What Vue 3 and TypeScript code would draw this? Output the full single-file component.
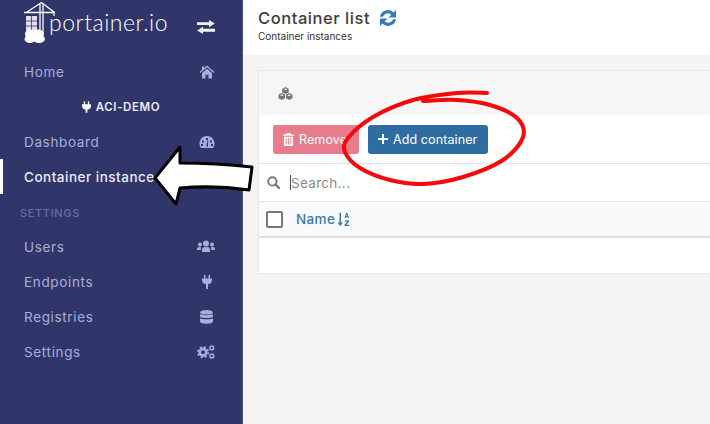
<script setup lang="ts">
interface NavItem { label: string; icon: string; active?: boolean }
const topItems: NavItem[] = [{ label: 'Dashboard', icon: 'gauge' }, { label: 'Container instances', icon: '', active: true }]
const settingsItems: NavItem[] = [
  { label: 'Users', icon: 'users' },
  { label: 'Endpoints', icon: 'plug' },
  { label: 'Registries', icon: 'db' },
  { label: 'Settings', icon: 'cogs' },
]

// hand-drawn red ring: a smooth line through the sampled points
const ring: [number, number][] = [
  [487, 93], [457, 93], [413, 100], [373, 117], [348, 138], [345, 152], [360, 168], [390, 180],
  [423, 184], [463, 177], [503, 160], [523, 137], [517, 118], [490, 105], [457, 100], [423, 101],
]
function smooth(p: [number, number][]): string {
  let d = `M${p[0][0]} ${p[0][1]}`
  for (let i = 0; i < p.length - 1; i++) {
    const a = p[Math.max(i - 1, 0)]
    const b = p[i]
    const c = p[i + 1]
    const e = p[Math.min(i + 2, p.length - 1)]
    d += `C${b[0] + (c[0] - a[0]) / 6} ${b[1] + (c[1] - a[1]) / 6} ${c[0] - (e[0] - b[0]) / 6} ${c[1] - (e[1] - b[1]) / 6} ${c[0]} ${c[1]}`
  }
  return d
}
const ringPath = smooth(ring)
</script>

<template>
  <div class="page">
    <aside class="sidebar">
      <div class="brand">
        <svg class="logo" viewBox="0 0 32 44" width="32" height="44">
          <g fill="none" stroke="#fff" stroke-width="1.300">
            <path d="M0 11.500H31M16 2V32M19 2V32M17.500 1.500 3 11M17.500 1.500 30 11M30 11V15" />
          </g>
          <rect x="2" y="15" width="11" height="16" fill="#fff" opacity=".85" />
          <path d="M2 20H13M2 25H13M7.500 15V31" stroke="#30366a" stroke-width=".8" />
          <ellipse cx="6" cy="33" rx="5" ry="4.500" fill="#fff" />
          <ellipse cx="14" cy="33" rx="6" ry="4.500" fill="#fff" />
          <ellipse cx="6" cy="38" rx="5.500" ry="4" fill="#fff" />
          <ellipse cx="15" cy="38" rx="6" ry="4" fill="#fff" />
        </svg>
        <span class="brand-name">portainer.io</span>
        <svg class="swap" viewBox="0 0 18 14" width="18" height="14">
          <path d="M0 2.200H12V0L17.800 3.600 12 7.200V5H0ZM18 8.800H6V6.800L.2 10.400 6 14V11.800H18Z" fill="#f3f4fa" />
        </svg>
      </div>

      <nav class="nav">
        <a class="item">
          <span>Home</span>
          <svg class="icon" viewBox="0 0 16 14" width="16" height="14">
            <path d="M8 .5 15.500 7 14.700 8 8 2.300 1.300 8 .5 7 3 4.800V1.500H5V3.100ZM3 8 8 3.700 13 8V13.500H9.500V9.800H6.500V13.500H3Z" fill="currentColor" />
          </svg>
        </a>
        <div class="endpoint">
          <svg viewBox="0 0 10 13" width="9" height="12">
            <path d="M2 0H3.500V3.500H6.500V0H8V3.500H10V5C10 7.500 8.500 9 6 9.300V13H4V9.300C1.500 9 0 7.500 0 5V3.500H2Z" fill="#fff" />
          </svg>
          <span>ACI-DEMO</span>
        </div>
        <template v-for="it in topItems" :key="it.label">
          <a class="item" :class="{ active: it.active }">
            <span>{{ it.label }}</span>
            <svg v-if="it.icon === 'gauge'" class="icon" viewBox="0 0 16 14" width="16" height="14">
              <path fill-rule="evenodd" d="M8 1A7.500 7.500 0 0 0 2 13H14A7.500 7.500 0 0 0 8 1ZM7 3H9V5H7ZM3 5.500H5V7.500H3ZM11 5.500H13V7.500H11ZM2 9H4V11H2ZM12 9H14V11H12ZM7.200 11.500 8.500 5.500 9.300 5.700 8.900 11.500Z" fill="currentColor" />
            </svg>
          </a>
        </template>
        <div class="section">SETTINGS</div>
        <a v-for="it in settingsItems" :key="it.label" class="item">
          <span>{{ it.label }}</span>
          <svg v-if="it.icon === 'users'" class="icon" viewBox="0 0 18 13" width="18" height="13">
            <circle cx="9" cy="3.500" r="3" fill="currentColor" /><circle cx="3" cy="4.500" r="2" fill="currentColor" /><circle cx="15" cy="4.500" r="2" fill="currentColor" />
            <path d="M5 12V9.500C5 7.800 6.500 7 9 7S13 7.800 13 9.500V12ZM0 10V8.500C0 7.500 1 7 3.500 7 3.800 7 4 7.500 4 7.800 3.700 8.500 3.800 9.300 3.800 10ZM18 10V8.500C18 7.500 17 7 14.500 7 14.200 7 14 7.500 14 7.800 14.300 8.500 14.200 9.300 14.200 10Z" fill="currentColor" />
          </svg>
          <svg v-else-if="it.icon === 'plug'" class="icon plug" viewBox="0 0 10 14" width="10" height="14">
            <path d="M2 0H3.500V3.500H6.500V0H8V3.500H10V5C10 7.500 8.500 9 6 9.300V14H4V9.300C1.500 9 0 7.500 0 5V3.500H2Z" fill="currentColor" />
          </svg>
          <svg v-else-if="it.icon === 'db'" class="icon db" viewBox="0 0 13 14" width="13" height="14">
            <ellipse cx="6.500" cy="2.300" rx="6.500" ry="2.300" fill="currentColor" />
            <path d="M0 4C1.500 5.500 11.500 5.500 13 4V6.500C13 8.500 0 8.500 0 6.500ZM0 8.200C1.500 9.700 11.500 9.700 13 8.200V11.500C13 14.500 0 14.500 0 11.500Z" fill="currentColor" />
          </svg>
          <svg v-else-if="it.icon === 'cogs'" class="icon" viewBox="0 0 18 14" width="18" height="14">
            <circle cx="6" cy="7.200" r="3.300" fill="none" stroke="currentColor" stroke-width="2.600" />
            <circle cx="6" cy="7.200" r="5.200" fill="none" stroke="currentColor" stroke-width="1.700" stroke-dasharray="2.100 2" />
            <circle cx="14.800" cy="3" r="1.900" fill="none" stroke="currentColor" stroke-width="1.500" />
            <circle cx="14.800" cy="11" r="1.900" fill="none" stroke="currentColor" stroke-width="1.500" />
          </svg>
        </a>
      </nav>
    </aside>

    <main class="main">
      <header class="head">
        <div class="title-row">
          <h1>Container list</h1>
          <svg viewBox="0 0 18 18" width="18" height="18" class="refresh">
            <path d="M1 7.800A8 8 0 0 1 14.600 3.500L17 1V8.500H9.500L12.300 5.700A5 5 0 0 0 4 7.800ZM17 10.200A8 8 0 0 1 3.400 14.500L1 17V9.500H8.500L5.700 12.300A5 5 0 0 0 14 10.200Z" fill="#337ab7" />
          </svg>
        </div>
        <p>Container instances</p>
      </header>

      <section class="card">
        <div class="card-title">
          <svg viewBox="0 0 16 14" width="15" height="13">
            <path fill-rule="evenodd" d="M8 0 11.500 1.800V5.800L8 7.600 4.500 5.800V1.800ZM8 1.400 6 2.400 8 3.400 10 2.400ZM4 6.400 7.500 8.200V12.200L4 14 .5 12.200V8.200ZM4 7.800 2 8.800 4 9.800 6 8.800ZM12 6.400 15.500 8.200V12.200L12 14 8.500 12.200V8.200ZM12 7.800 10 8.800 12 9.800 14 8.800Z" fill="#767676" />
          </svg>
        </div>
        <div class="actions">
          <button class="btn danger">
            <svg viewBox="0 0 12 14" width="11" height="13"><path d="M4 0H8L9 1.500H12V3H0V1.500H3ZM1 4H11V13A1 1 0 0 1 10 14H2A1 1 0 0 1 1 13ZM3 5.500V12.500H4V5.500ZM5.500 5.500V12.500H6.500V5.500ZM8 5.500V12.500H9V5.500Z" fill="#fff" fill-rule="evenodd"/></svg>
            Remove
          </button>
          <button class="btn primary">
            <svg viewBox="0 0 10 10" width="10" height="10"><path d="M4 0H6V4H10V6H6V10H4V6H0V4H4Z" fill="#fff"/></svg>
            Add container
          </button>
        </div>
        <div class="search">
          <svg viewBox="0 0 14 14" width="13" height="13"><circle cx="5.800" cy="5.800" r="4.500" fill="none" stroke="#767676" stroke-width="2"/><path d="M9 9 13 13" stroke="#767676" stroke-width="2.400" stroke-linecap="round"/></svg>
          <span class="caret"></span>
          <span class="ph">Search...</span>
        </div>
        <div class="thead">
          <span class="check"></span>
          <span class="name">Name</span>
          <svg viewBox="0 0 12 13" width="13" height="13">
            <path d="M2 0H3.500V9.500H5.500L2.800 13 0 9.500H2Z" fill="#3d76a8" />
            <path d="M8.500 0H10L11.500 5H10.300L10 4H8.500L8.200 5H7ZM8.800 3H9.700L9.250 1.300ZM7.300 7.500H11.500V8.700L8.900 11.700H11.500V13H7V11.800L9.700 8.800H7.300Z" fill="#3d76a8" />
          </svg>
        </div>
        <div class="tbody"></div>
      </section>
    </main>

    <svg class="scribble" viewBox="0 0 710 424" width="710" height="424">
      <path d="M155 178 L180 147 L180 163 Q215 163 252 167 L249 190 Q215 185 180 188 L176 204 Z" fill="#fff" stroke="#000" stroke-width="3" stroke-linejoin="round" />
      <path :d="ringPath" fill="none" stroke="#f40a0a" stroke-width="4" stroke-linecap="round" />
    </svg>
  </div>
</template>

<style scoped>
.page {
  position: relative;
  width: 710px;
  height: 424px;
  overflow: hidden;
  display: flex;
  font-family: Inter, "Liberation Sans", sans-serif;
  background: #f4f4f4;
}
.sidebar {
  width: 243px;
  flex: none;
  background: #30366a;
  border-right: 1px solid #494e80;
  box-sizing: border-box;
  color: #a9aed8;
}
.brand {
  height: 54px;
  display: flex;
  align-items: center;
  padding: 0 27px 0 24px;
  color: #fff;
}
.logo { margin-top: -8px; flex: none; margin-right: -7px; }
.brand-name {
  font-family: Lato, sans-serif;
  font-weight: 300;
  font-size: 23px;
  flex: 1;
  margin-top: -10px;
  letter-spacing: .5px;
}
.swap { margin-top: 0; }
.nav { display: flex; flex-direction: column; }
.item {
  height: 35px;
  display: flex;
  align-items: center;
  justify-content: space-between;
  padding: 0 27px 0 24px;
  font-size: 13.500px;
  letter-spacing: .65px;
  color: #a9aed8;
  box-sizing: border-box;
}
.item.active {
  color: #e9ebf8;
  font-weight: 500;
  border-left: 3px solid #fff;
  padding-left: 21px;
  white-space: nowrap;
  overflow: hidden;
  letter-spacing: .5px;
}
.icon { flex: none; }
.plug { margin-right: 3px; }
.db { margin-right: 2px; }
.endpoint {
  height: 35px;
  display: flex;
  align-items: center;
  justify-content: center;
  gap: 5px;
  padding-top: 1px;
  box-sizing: border-box;
  color: #e9ebf8;
  font-size: 11.500px;
  font-weight: 600;
  letter-spacing: .6px;
}
.section {
  height: 35px;
  display: flex;
  align-items: center;
  padding: 2px 0 0 20px;
  box-sizing: border-box;
  font-size: 11px;
  letter-spacing: .65px;
  color: #666da6;
  font-weight: 500;
}
.main { flex: 1; min-width: 0; }
.head {
  height: 55px;
  background: #fff;
  padding: 8px 15px 0;
  box-sizing: border-box;
}
.title-row { display: flex; align-items: center; gap: 9px; }
h1 {
  margin: 0;
  font-size: 16.500px;
  font-weight: 500;
  color: #3d3d3d;
  letter-spacing: .55px;
}
.head p { margin: 2px 0 0; font-size: 10px; color: #333; }
.card {
  margin: 15px 0 0 15px;
  background: #fff;
  border: 1px solid #e8e8e8;
  border-right: 0;
}
.card-title {
  height: 44px;
  background: #f6f6f6;
  display: flex;
  align-items: center;
  padding-left: 19px;
  box-sizing: border-box;
}
.actions {
  height: 49px;
  display: flex;
  align-items: center;
  gap: 9px;
  padding: 0 14px;
  border-bottom: 1px solid #e4e4e4;
  box-sizing: border-box;
}
.btn {
  height: 29px;
  border: 0;
  border-radius: 3px;
  color: #fff;
  font: inherit;
  font-size: 12.500px;
  display: inline-flex;
  align-items: center;
  gap: 5px;
  letter-spacing: .1px;
}
.danger { width: 86px; background: #e87c8c; padding: 0 10px; }
.primary { width: 120px; background: #2e6da4; padding: 0 10px; }
.search {
  height: 38px;
  display: flex;
  align-items: center;
  padding-left: 8px;
  border-bottom: 1px solid #e4e4e4;
  box-sizing: border-box;
}
.caret { width: 1px; height: 15px; background: #555; margin-left: 10px; }
.ph { font-size: 13.500px; color: #8a8a8a; letter-spacing: .3px; }
.thead {
  height: 36px;
  display: flex;
  align-items: center;
  padding-left: 7px;
  background: #f9fafc;
  border-bottom: 2px solid #dedede;
  box-sizing: border-box;
  gap: 2px;
}
.check {
  width: 13px;
  height: 13px;
  border: 2px solid #777;
  border-radius: 2px;
  background: #fff;
  margin-right: 11px;
}
.name { font-size: 13.500px; font-weight: 500; color: #3d76a8; letter-spacing: .35px; }
.tbody { height: 35px; }
.scribble { position: absolute; inset: 0; pointer-events: none; }
</style>
